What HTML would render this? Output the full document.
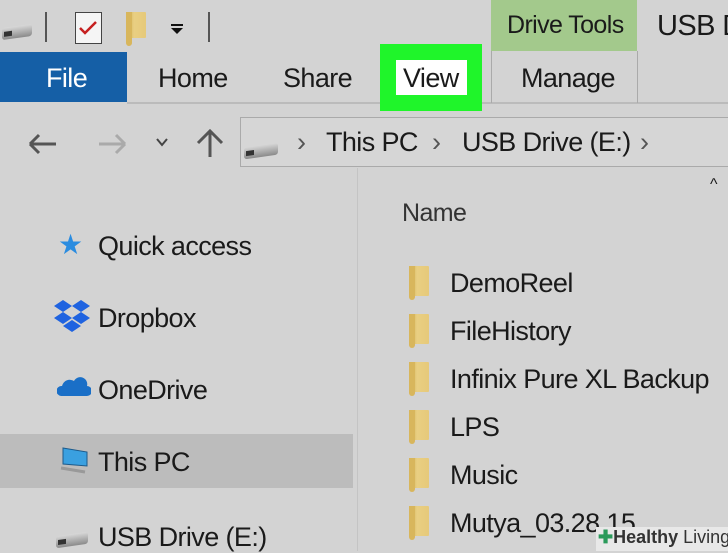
<!DOCTYPE html>
<html><head><meta charset="utf-8"><style>
body{margin:0;width:728px;height:551px;overflow:hidden;background:#d3d3d3;font-family:"Liberation Sans Narrow","Liberation Sans",sans-serif;color:#1a1a1a;position:relative}
.a{position:absolute;white-space:nowrap}
.t{font-size:27px;letter-spacing:-0.6px}
.folder{position:absolute;width:20px;height:30px;background:linear-gradient(90deg,#c9a84a,#e9cf82 40%,#e6c97a);border-radius:1px}
.folder:before{content:"";position:absolute;left:0;top:0;width:6px;height:34px;background:#d8b65c;border-radius:0 0 3px 3px}
.drive{position:absolute;width:30px;height:12px;background:linear-gradient(#d8d8d8,#8a8a8a);border-radius:3px;transform:skewY(-8deg)}
.drive:after{content:"";position:absolute;left:2px;top:4px;width:8px;height:5px;background:#333}
</style></head><body>
<div class="drive" style="left:2px;top:26px"></div>
<div class="a" style="left:45px;top:12px;width:2px;height:30px;background:#555"></div>
<div class="a" style="left:75px;top:12px;width:25px;height:30px;border:1px solid #444;background:#f5f5f5"></div>
<svg class="a" style="left:78px;top:20px" width="20" height="16"><path d="M2 8 L7 13 L18 2" stroke="#c62020" stroke-width="2.5" fill="none"/></svg>
<div class="folder" style="left:126px;top:12px;height:26px"></div>
<svg class="a" style="left:170px;top:22px" width="14" height="14"><rect x="1" y="2" width="12" height="2" fill="#111"/><path d="M1 6 L13 6 L7 12Z" fill="#111"/></svg>
<div class="a" style="left:208px;top:12px;width:2px;height:30px;background:#555"></div>
<div class="a" style="left:491px;top:0;width:146px;height:51px;background:#a3c98c"></div>
<div class="a t" style="left:507px;top:11px;font-size:25px">Drive Tools</div>
<div class="a t" style="left:657px;top:10px;font-size:29px">USB D</div>
<div class="a" style="left:0;top:52px;width:127px;height:50px;background:#155fa6"></div>
<div class="a t" style="left:46px;top:63px;color:#fff">File</div>
<div class="a" style="left:127px;top:102px;width:601px;height:2px;background:#bbb"></div>
<div class="a t" style="left:158px;top:63px">Home</div>
<div class="a t" style="left:283px;top:63px">Share</div>
<div class="a" style="left:491px;top:51px;width:1px;height:52px;background:#aaa"></div>
<div class="a" style="left:637px;top:51px;width:1px;height:52px;background:#aaa"></div>
<div class="a t" style="left:521px;top:63px">Manage</div>
<div class="a" style="left:380px;top:44px;width:102px;height:67px;background:#1ff52a"></div>
<div class="a" style="left:396px;top:60px;width:71px;height:35px;background:#fff"></div>
<div class="a t" style="left:403px;top:63px">View</div>
<svg class="a" style="left:26px;top:130px" width="150" height="30"><path d="M4 14 H30 M4 14 L13 5 M4 14 L13 23" stroke="#555" stroke-width="3" fill="none"/><path d="M73 14 H99 M99 14 L90 5 M99 14 L90 23" stroke="#aaa" stroke-width="3" fill="none"/><path d="M131 9 L136 15 L141 9" stroke="#444" stroke-width="2" fill="none"/></svg>
<svg class="a" style="left:196px;top:128px" width="28" height="30"><path d="M14 29 V3 M2 15 L14 3 L26 15" stroke="#555" stroke-width="3" fill="none"/></svg>
<div class="a" style="left:240px;top:117px;width:488px;height:48px;border:1px solid #aaa;border-right:none;background:#d6d6d6"></div>
<div class="drive" style="left:244px;top:145px;width:34px"></div>
<div class="a t" style="left:297px;top:127px;color:#555">›</div>
<div class="a t" style="left:326px;top:127px">This PC</div>
<div class="a t" style="left:432px;top:127px;color:#555">›</div>
<div class="a t" style="left:462px;top:127px">USB Drive (E:)</div>
<div class="a t" style="left:640px;top:127px;color:#555">›</div>
<div class="a" style="left:710px;top:176px;font-size:16px">^</div>
<div class="a" style="left:357px;top:168px;width:1px;height:383px;background:#c4c4c4"></div>
<div class="a" style="left:0;top:434px;width:353px;height:54px;background:#bcbcbc"></div>
<div class="a" style="left:58px;top:228px;color:#2a8ce0;font-size:28px">★</div>
<div class="a t" style="left:98px;top:231px">Quick access</div>
<svg class="a" style="left:54px;top:300px" width="36" height="34"><g fill="#1f63e0"><path d="M9 0 L18 6 L9 12 L0 6Z"/><path d="M27 0 L36 6 L27 12 L18 6Z"/><path d="M9 12 L18 18 L9 24 L0 18Z"/><path d="M27 12 L36 18 L27 24 L18 18Z"/><path d="M18 20 L27 26 L18 32 L9 26Z"/></g></svg>
<div class="a t" style="left:98px;top:303px">Dropbox</div>
<svg class="a" style="left:57px;top:375px" width="34" height="22"><path d="M4 21 H30 A5 5 0 0 0 30 11 A7 7 0 0 0 17 6 A8 8 0 0 0 5 11 A5 5 0 0 0 4 21Z" fill="#1a6fc7"/></svg>
<div class="a t" style="left:98px;top:375px">OneDrive</div>
<svg class="a" style="left:57px;top:446px" width="34" height="30"><path d="M6 2 L30 6 L30 20 L6 18Z" fill="#3aa0e0" stroke="#1d5a8a"/><path d="M4 22 L28 26" stroke="#999" stroke-width="3"/></svg>
<div class="a t" style="left:98px;top:447px">This PC</div>
<div class="drive" style="left:56px;top:534px;width:32px"></div>
<div class="a t" style="left:98px;top:522px">USB Drive (E:)</div>
<div class="a t" style="left:402px;top:199px;color:#333;font-size:25px">Name</div>
<div class="folder" style="left:409px;top:266px"></div><div class="a t" style="left:450px;top:268px">DemoReel</div>
<div class="folder" style="left:409px;top:314px"></div><div class="a t" style="left:450px;top:316px">FileHistory</div>
<div class="folder" style="left:409px;top:362px"></div><div class="a t" style="left:450px;top:364px">Infinix Pure XL Backup</div>
<div class="folder" style="left:409px;top:410px"></div><div class="a t" style="left:450px;top:412px">LPS</div>
<div class="folder" style="left:409px;top:458px"></div><div class="a t" style="left:450px;top:460px">Music</div>
<div class="folder" style="left:409px;top:506px"></div><div class="a t" style="left:450px;top:508px">Mutya_03.28.15</div>
<div class="a" style="left:596px;top:527px;width:132px;height:24px;background:#e8e8e8"></div>
<div class="a" style="left:598px;top:527px;font-size:18px;font-weight:bold;color:#333"><span style="color:#2a9a5a">✚</span>Healthy <span style="font-weight:normal">Living</span></div>
</body></html>
